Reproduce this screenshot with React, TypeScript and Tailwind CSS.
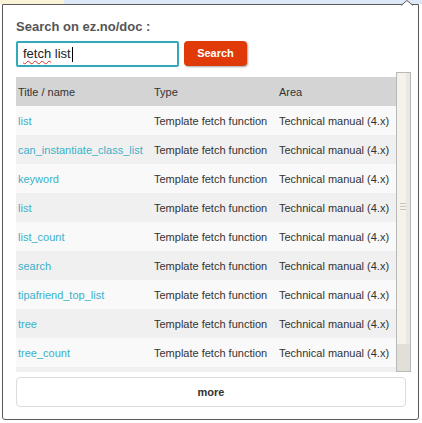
import React from 'react';

const ROWS = [
  'list',
  'can_instantiate_class_list',
  'keyword',
  'list',
  'list_count',
  'search',
  'tipafriend_top_list',
  'tree',
  'tree_count',
];

// Fake scrollbar, drawn so it looks like the old GTK one
const Scrollbar: React.FC = () => (
  <div className="w-[15px] h-full flex flex-col border border-[#b8b8b8] bg-[#e2ded8]">
    <div className="h-[271px] flex bg-[#f5f1eb] relative">
      <div className="flex-1" />
      <div className="w-[4px] bg-[#ebe7e1]" />
      <div className="absolute left-[3px] top-[130px] w-[6px] flex flex-col gap-[2px]">
        <div className="h-px bg-[#c9c5bf]" />
        <div className="h-px bg-[#c9c5bf]" />
        <div className="h-px bg-[#c9c5bf]" />
      </div>
    </div>
  </div>
);

const App: React.FC = () => {
  return (
    <div
      className="w-[422px] h-[423px] bg-white overflow-hidden relative"
      style={{ fontFamily: '"Liberation Sans", Arial, sans-serif' }}
    >
      {/* page behind popup */}
      <div className="h-[4px] flex">
        <div className="w-[64px] bg-[#fbf3d6]" />
        <div className="flex-1 bg-[#dde9f6]" />
      </div>

      <div className="ml-[2px] w-[417px] h-[416px] border border-[#5a5a5a] rounded-b-[3px] bg-white relative">
        {/* notch */}
        <svg className="absolute -top-[5px] left-[398px]" width="12" height="6" viewBox="0 0 12 6">
          <path d="M0 5.5 L6 0.5 L12 5.5" fill="white" stroke="#5a5a5a" strokeWidth="1" />
        </svg>

        <div className="pl-[13px] pt-[14px]">
          <div className="text-[13px] leading-[16px] font-bold text-[#555]">Search on ez.no/doc :</div>

          <div className="flex items-start gap-[5px] mt-[6px]">
            <div className="w-[163px] h-[26px] border-2 border-[#31a9b8] rounded-[2px] flex items-center pl-[5px] text-[13px] text-[#222]">
              <span className="underline decoration-wavy decoration-[#e03030] decoration-1 underline-offset-2">fetch</span>
              <span>&nbsp;list</span>
              <span className="w-px h-[15px] bg-black ml-px" />
            </div>
            <button className="w-[63px] h-[25px] rounded-[4px] bg-[#e03a08] text-white text-[11px] font-bold shadow-[1px_1px_2px_rgba(0,0,0,0.35)]">
              Search
            </button>
          </div>

          <div className="mt-[5px] w-[395px] h-[300px] flex">
            <div className="w-[380px] h-full overflow-hidden pt-[5px] text-[11px] text-[#333]">
              <div className="grid grid-cols-[136px_125px_1fr] h-[29px] items-center bg-[#d4d4d4] pl-[2px] pt-px">
                <span>Title / name</span>
                <span>Type</span>
                <span>Area</span>
              </div>
              {ROWS.map((name, i) => (
                <div
                  key={i}
                  className={`grid grid-cols-[136px_125px_1fr] h-[29px] items-center pl-[2px] pt-[2px] ${i % 2 === 0 ? 'bg-[#f9f9f9]' : 'bg-[#f0f0f0]'}`}
                >
                  <span className="text-[#3bb0c9]">{name}</span>
                  <span>Template fetch function</span>
                  <span>Technical manual (4.x)</span>
                </div>
              ))}
              <div className="h-[29px] bg-[#f0f0f0]" />
            </div>
            <Scrollbar />
          </div>

          <button className="mt-[5px] w-[390px] h-[30px] border border-[#dcdcdc] rounded-[4px] bg-white text-[11px] font-bold text-[#333]">
            more
          </button>
        </div>
      </div>
    </div>
  );
};

export default App;
